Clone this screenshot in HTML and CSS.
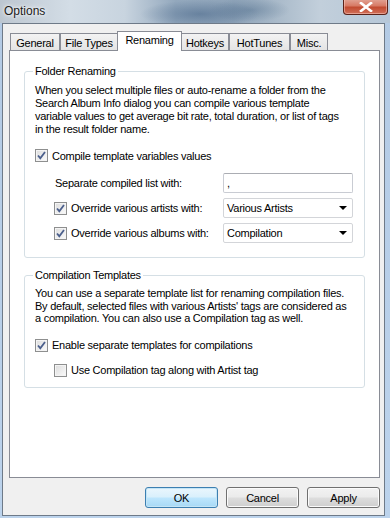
FILE: index.html
```html
<!DOCTYPE html>
<html lang="en">
<head>
    <meta charset="UTF-8">
    <meta name="viewport" content="width=device-width, initial-scale=1.0">
    <title>Options</title>
    <link rel="stylesheet" href="styles.css">
</head>
<body>

    <div class="window">
        <div class="titlebar">
            <span class="title">Options</span>
            <div class="close">
                <svg width="14" height="10" viewBox="0 0 14 10">
                    <path d="M2 1 L12 9 M12 1 L2 9" stroke="#ffffff" stroke-width="2.6" stroke-linecap="square"/>
                </svg>
            </div>
        </div>

        <div class="client">
            <div class="tabs">
                <div class="tab t-general">General</div>
                <div class="tab t-filetypes">File Types</div>
                <div class="tab t-renaming active">Renaming</div>
                <div class="tab t-hotkeys">Hotkeys</div>
                <div class="tab t-hottunes">HotTunes</div>
                <div class="tab t-misc">Misc.</div>
            </div>

            <div class="panel">
                <fieldset class="group group-folder">
                    <legend>Folder Renaming</legend>
                    <p>When you select multiple files or auto-rename a folder from the<br>
                    Search Album Info dialog you can compile various template<br>
                    variable values to get average bit rate, total duration, or list of tags<br>
                    in the result folder name.</p>

                    <label class="check check-compile">
                        <span class="box checked">
                            <svg width="11" height="11" viewBox="0 0 11 11"><path d="M2 5.5 L4.3 8.2 L9 2" fill="none" stroke="#4b5f8c" stroke-width="1.8"/></svg>
                        </span>
                        Compile template variables values
                    </label>

                    <div class="options">
                        <span class="field-label">Separate compiled list with:</span>
                        <div class="textbox">,</div>

                        <label class="check">
                            <span class="box checked">
                                <svg width="11" height="11" viewBox="0 0 11 11"><path d="M2 5.5 L4.3 8.2 L9 2" fill="none" stroke="#4b5f8c" stroke-width="1.8"/></svg>
                            </span>
                            Override various artists with:
                        </label>
                        <div class="combo">Various Artists<span class="arrow"></span></div>

                        <label class="check">
                            <span class="box checked">
                                <svg width="11" height="11" viewBox="0 0 11 11"><path d="M2 5.5 L4.3 8.2 L9 2" fill="none" stroke="#4b5f8c" stroke-width="1.8"/></svg>
                            </span>
                            Override various albums with:
                        </label>
                        <div class="combo">Compilation<span class="arrow"></span></div>
                    </div>
                </fieldset>

                <fieldset class="group group-compilation">
                    <legend>Compilation Templates</legend>
                    <p>You can use a separate template list for renaming compilation files.<br>
                    By default, selected files with various Artists' tags are considered as<br>
                    a compilation. You can also use a Compilation tag as well.</p>

                    <label class="check check-enable">
                        <span class="box checked">
                            <svg width="11" height="11" viewBox="0 0 11 11"><path d="M2 5.5 L4.3 8.2 L9 2" fill="none" stroke="#4b5f8c" stroke-width="1.8"/></svg>
                        </span>
                        Enable separate templates for compilations
                    </label>

                    <label class="check check-use">
                        <span class="box"></span>
                        Use Compilation tag along with Artist tag
                    </label>
                </fieldset>
            </div>

            <div class="buttons">
                <button class="btn btn-default">OK</button>
                <button class="btn">Cancel</button>
                <button class="btn">Apply</button>
            </div>
        </div>
    </div>

</body>
</html>
```

FILE: styles.css
```css
/* General styling */
body {
    margin: 0;
    padding: 0;
    font-family: 'Liberation Sans', Arial, sans-serif;
    font-size: 11px;
    letter-spacing: -0.25px;
    color: #000;
}

.window {
    width: 390px;
    height: 518px;
    box-sizing: border-box;
    background: linear-gradient(to bottom, #b3cae4, #bcd3ec);
    display: flex;
    flex-direction: column;
}

/* Title bar (aero glass) */
.titlebar {
    height: 23px;
    display: flex;
    justify-content: space-between;
    align-items: flex-start;
    background:
        radial-gradient(ellipse 60px 14px at 200px 14px, rgba(70, 100, 135, 0.55), transparent),
        radial-gradient(ellipse 40px 12px at 250px 10px, rgba(80, 110, 140, 0.45), transparent),
        linear-gradient(to right, #bcc6d0 0%, #d3dde6 18%, #c8d4df 32%, #93a8bd 45%, #8fa4b9 60%, #a7b8c8 70%, #c2cfdb 82%, #b6c7d8 100%);
}

.title {
    font-size: 12px;
    letter-spacing: 0;
    color: #1b1b1b;
    padding: 4px 0 0 4px;
    text-shadow: 0 0 6px #fff, 0 0 3px #fff;
}

.close {
    width: 45px;
    height: 16px;
    margin: -1px 2px 0 0;
    box-sizing: border-box;
    border: 1px solid #5b2219;
    border-top: none;
    border-radius: 0 0 4px 4px;
    background: linear-gradient(to bottom, #e2a597 0%, #d77a65 45%, #c24b31 55%, #d0705a 100%);
    box-shadow: inset 0 0 0 1px rgba(255, 210, 200, 0.5);
    display: flex;
    justify-content: center;
    align-items: center;
}

/* Client area */
.client {
    flex: 1;
    margin: 0 5px 2px 2px;
    border: 1px solid #6e7a88;
    background-color: #f0f0f0;
    display: flex;
    flex-direction: column;
}

.tabs {
    display: flex;
    align-items: flex-end;
    height: 20px;
    margin: 7px 0 -1px 7px;
}

.tab {
    height: 17px;
    margin-bottom: 1px;
    box-sizing: border-box;
    border: 1px solid #898c95;
    border-bottom: none;
    background: linear-gradient(to bottom, #f3f3f3, #e4e4e4);
    text-align: center;
    line-height: 17px;
    padding-top: 1px;
}

.tab.active {
    height: 20px;
    margin: 0 0 0 -1px;
    background: #fff;
    line-height: 17px;
    padding-top: 0;
    position: relative;
    z-index: 1;
}

.t-general { width: 50px; }
.t-filetypes { width: 58px; }
.t-renaming { width: 65px; }
.t-hotkeys { width: 48px; margin-left: -1px; }
.t-hottunes { width: 61px; }
.t-misc { width: 38px; }

.panel {
    height: 428px;
    box-sizing: border-box;
    margin: 0 4px 0 6px;
    border: 1px solid #898c95;
    background: #fff;
    padding: 0 14px;
}

/* Group boxes */
.group {
    margin: 13px 0 0 0;
    padding: 6px 11px 14px 10px;
    border: 1px solid #d5dfe5;
    border-radius: 3px;
    min-inline-size: 0;
}

.group legend {
    padding: 0 2px;
    margin-left: -2px;
    line-height: 14px;
}

.group p {
    margin: 0;
    line-height: 13px;
    white-space: nowrap;
}

.group-compilation {
    margin-top: 10px;
    padding-top: 5px;
    padding-bottom: 9px;
}

.group-compilation p {
    line-height: 12.5px;
}

/* Checkboxes */
.check {
    display: flex;
    align-items: center;
    height: 15px;
}

.box {
    width: 13px;
    height: 13px;
    box-sizing: border-box;
    border: 1px solid #8e8f8f;
    background: linear-gradient(135deg, #dcdcdc, #fbfbfb);
    box-shadow: inset 0 0 0 1px #f4f4f4;
    margin-right: 4px;
    display: flex;
    justify-content: center;
    align-items: center;
    flex-shrink: 0;
}

.check-compile {
    margin-top: 12px;
}

.check-enable {
    margin-top: 13px;
}

.check-use {
    margin: 10px 0 0 19px;
}

/* Indented options */
.options {
    display: grid;
    grid-template-columns: 1fr 130px;
    row-gap: 5px;
    margin: 10px 0 0 19px;
    align-items: center;
}

.field-label {
    padding-left: 1px;
}

.textbox,
.combo {
    height: 20px;
    box-sizing: border-box;
    border: 1px solid #c9ccd3;
    border-top-color: #abadb3;
    border-radius: 2px;
    background: #fff;
    padding-left: 3px;
    line-height: 18px;
}

.combo {
    display: flex;
    justify-content: space-between;
    align-items: center;
    border-color: #d3d5d9;
}

.arrow {
    width: 0;
    height: 0;
    margin-right: 5px;
    border-left: 4px solid transparent;
    border-right: 4px solid transparent;
    border-top: 4px solid #000;
}

/* Buttons */
.buttons {
    display: flex;
    justify-content: flex-end;
    gap: 8px;
    margin: 9px 4px 0 0;
}

.btn {
    width: 73px;
    height: 21px;
    padding: 0;
    font-family: 'Liberation Sans', Arial, sans-serif;
    font-size: 11px;
    letter-spacing: -0.25px;
    color: #000;
    border: 1px solid #707070;
    border-radius: 3px;
    background: linear-gradient(to bottom, #f2f2f2 0%, #ebebeb 48%, #dddddd 52%, #cfcfcf 100%);
    box-shadow: inset 0 0 0 1px #fbfbfb;
}

.btn-default {
    border-color: #3c7fb1;
    background: linear-gradient(to bottom, #eaf6fd 0%, #d9f0fc 48%, #bee6fd 52%, #a7d9f5 100%);
    box-shadow: inset 0 0 0 1px #c4e5f6;
}
```
